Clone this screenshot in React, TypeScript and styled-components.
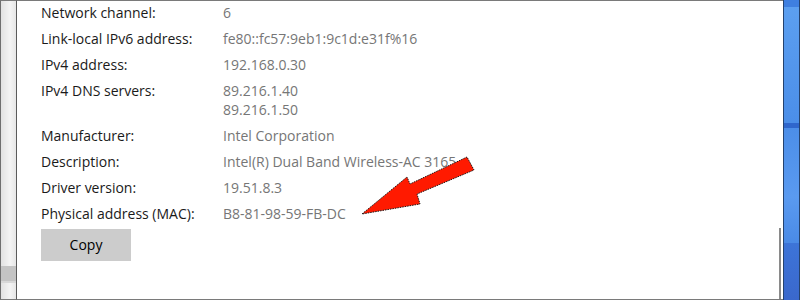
import React from 'react';
import styled, { createGlobalStyle } from 'styled-components';

const GlobalStyle = createGlobalStyle`
  html, body {
    margin: 0;
    padding: 0;
    background: #ffffff;
  }
  body {
    font-family: "Open Sans", "Noto Sans", "Liberation Sans", sans-serif;
  }
`;

const Frame = styled.div`
  width: 800px;
  height: 300px;
  display: flex;
  box-sizing: border-box;
  overflow: hidden;
`;

const BackWindow = styled.div`
  width: 15px;
  height: 300px;
  box-sizing: border-box;
  border-left: 1px solid #6f6f6f;
  border-right: 1px solid #5a5a5a;
  border-top: 1px solid #7a7a7a;
  border-bottom: 1px solid #7a7a7a;
  width: 17px;
  display: flex;
  flex-direction: column;
  background: linear-gradient(to right, #e2e2e2, #f4f4f4 60%, #e6e6e6);
`;

const BackFill = styled.div<{ $h: number; $bg: string }>`
  height: ${p => p.$h}px;
  flex: none;
  background: ${p => p.$bg};
`;

const Panel = styled.div`
  position: relative;
  flex: 1;
  height: 300px;
  box-sizing: border-box;
  background: #ffffff;
  border-top: 1px solid #7a7a7a;
  border-bottom: 1px solid #7a7a7a;
  padding: 2px 0 0 24px;
`;

const Details = styled.dl`
  margin: 0;
  display: grid;
  grid-template-columns: 182px 1fr;
  row-gap: 7px;
  font-size: 14px;
  line-height: 19px;
`;

const Label = styled.dt`
  color: #1a1a1a;
  white-space: nowrap;
`;

const Value = styled.dd`
  margin: 0;
  color: #767676;
  white-space: nowrap;
  display: flex;
  flex-direction: column;
`;

const CopyButton = styled.button`
  margin-top: 6px;
  width: 90px;
  height: 32px;
  border: none;
  background: #cccccc;
  color: #000000;
  font-family: inherit;
  font-size: 14px;
  padding: 0 0 1px;
`;

const ScrollThumb = styled.div`
  position: absolute;
  right: 2px;
  top: 227px;
  bottom: 0;
  width: 2px;
  background: #8a8a8a;
`;

const Pointer = styled.svg`
  position: absolute;
  left: 0;
  top: 0;
  overflow: visible;
  pointer-events: none;
`;

const Desktop = styled.div`
  width: 17px;
  height: 300px;
  flex: none;
  box-sizing: border-box;
  border-left: 1px solid #24426e;
  border-right: 1px solid #24426e;
  display: flex;
  flex-direction: column;
`;

const Sky = styled.div<{ $h: number; $bg: string }>`
  height: ${p => p.$h}px;
  flex: ${p => (p.$h ? 'none' : '1')};
  background: ${p => p.$bg};
`;

const rows: { label: string; values: string[] }[] = [
  { label: 'Network channel:', values: ['6'] },
  { label: 'Link-local IPv6 address:', values: ['fe80::fc57:9eb1:9c1d:e31f%16'] },
  { label: 'IPv4 address:', values: ['192.168.0.30'] },
  { label: 'IPv4 DNS servers:', values: ['89.216.1.40', '89.216.1.50'] },
  { label: 'Manufacturer:', values: ['Intel Corporation'] },
  { label: 'Description:', values: ['Intel(R) Dual Band Wireless-AC 3165'] },
  { label: 'Driver version:', values: ['19.51.8.3'] },
  { label: 'Physical address (MAC):', values: ['B8-81-98-59-FB-DC'] },
];

// panel starts at x=17 in the screenshot
const ox = 17;
const arrow = [
  [362, 213],
  [407, 176],
  [410, 183],
  [467, 156],
  [474, 169],
  [417, 193],
  [420, 203],
]
  .map(([x, y]) => `${x - ox},${y}`)
  .join(' ');

const App: React.FC = () => (
  <>
    <GlobalStyle />
    <Frame>
      <BackWindow>
        <BackFill $h={265} $bg="transparent" />
        <BackFill $h={15} $bg="#c4c4c4" />
        <BackFill $h={2} $bg="#d8d8d8" />
      </BackWindow>
      <Panel>
        <Details>
          {rows.map(r => (
            <React.Fragment key={r.label}>
              <Label>{r.label}</Label>
              <Value>
                {r.values.map(v => (
                  <span key={v}>{v}</span>
                ))}
              </Value>
            </React.Fragment>
          ))}
        </Details>
        <CopyButton>Copy</CopyButton>
        <ScrollThumb />
        <Pointer width="1" height="1">
          <polygon points={arrow} fill="#ff1a00" stroke="#1a1a1a" strokeWidth="1" strokeDasharray="1.5 1" />
        </Pointer>
      </Panel>
      <Desktop>
        <Sky $h={7} $bg="#3f7fe0" />
        <Sky $h={116} $bg="linear-gradient(#5c9ff0, #4b8ee8)" />
        <Sky $h={5} $bg="#2f66cc" />
        <Sky $h={115} $bg="linear-gradient(#4c8ee8, #5a9af0 60%, #4a8ae6)" />
        <Sky $h={0} $bg="linear-gradient(#3d74d8, #3a68cc)" />
      </Desktop>
    </Frame>
  </>
);

export default App;
